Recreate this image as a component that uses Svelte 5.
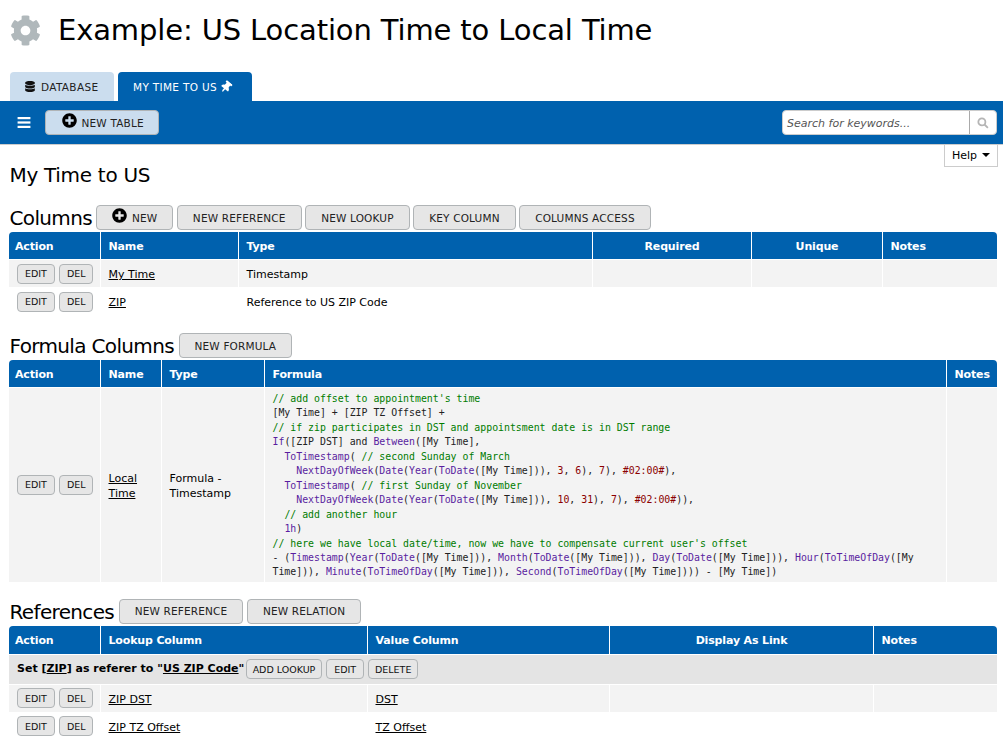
<script>
  const plus = "M256 8C119 8 8 119 8 256s111 248 248 248 248-111 248-248S393 8 256 8zm144 276c0 6.600-5.400 12-12 12h-92v92c0 6.600-5.400 12-12 12h-56c-6.600 0-12-5.400-12-12v-92h-92c-6.600 0-12-5.400-12-12v-56c0-6.600 5.400-12 12-12h92v-92c0-6.600 5.400-12 12-12h56c6.600 0 12 5.400 12 12v92h92c6.600 0 12 5.400 12 12v56z";

  const columns = [
    { name: "My Time", type: "Timestamp" },
    { name: "ZIP", type: "Reference to US ZIP Code" }
  ];
  const lookups = [
    { name: "ZIP DST", value: "DST" },
    { name: "ZIP TZ Offset", value: "TZ Offset" }
  ];
</script>

<header class="title">
  <svg class="gear" viewBox="0 0 512 512"><path d="M487.400 315.700l-42.600-24.600c4.300-23.200 4.300-47 0-70.200l42.600-24.600c4.900-2.800 7.100-8.600 5.500-14-11.100-35.600-30-67.800-54.700-94.600-3.800-4.100-10-5.100-14.800-2.300L380.800 110c-17.900-15.400-38.500-27.300-60.800-35.100V25.800c0-5.600-3.900-10.500-9.400-11.700-36.700-8.200-74.300-7.800-109.200 0-5.500 1.200-9.400 6.100-9.400 11.700V75c-22.200 7.900-42.800 19.800-60.800 35.100L88.700 85.500c-4.900-2.800-11-1.900-14.800 2.300-24.700 26.700-43.600 58.900-54.700 94.600-1.700 5.400.6 11.200 5.500 14L67.300 221c-4.300 23.200-4.300 47 0 70.200l-42.600 24.600c-4.900 2.800-7.100 8.600-5.500 14 11.100 35.600 30 67.800 54.700 94.600 3.800 4.100 10 5.100 14.800 2.300l42.600-24.600c17.900 15.400 38.500 27.300 60.800 35.100v49.200c0 5.600 3.900 10.500 9.400 11.700 36.700 8.200 74.300 7.800 109.200 0 5.500-1.200 9.400-6.100 9.400-11.700v-49.200c22.200-7.900 42.800-19.800 60.800-35.100l42.600 24.600c4.900 2.800 11 1.900 14.800-2.300 24.700-26.700 43.600-58.900 54.700-94.600 1.500-5.500-.7-11.300-5.600-14.100zM256 336c-44.100 0-80-35.900-80-80s35.900-80 80-80 80 35.900 80 80-35.900 80-80 80z" /></svg>
  <h1>Example: US Location Time to Local Time</h1>
</header>

<nav class="tabs">
  <div class="tab">
    <svg class="tab-icon" viewBox="0 0 448 512"><path d="M448 73v46c0 40-100 73-224 73S0 159 0 119V73C0 33 100 0 224 0s224 33 224 73zm0 103v103c0 40-100 73-224 73S0 319 0 279V176c48 33 136 49 224 49s176-16 224-49zm0 160v103c0 40-100 73-224 73S0 479 0 439V336c48 33 136 49 224 49s176-16 224-49z" /></svg>
    DATABASE
  </div>
  <div class="tab active">
    MY TIME TO US
    <svg class="pin" viewBox="0 0 384 512"><path d="M298 214L286 96h42c13 0 24-11 24-24V24c0-13-11-24-24-24H56C43 0 32 11 32 24v48c0 13 11 24 24 24h42L86 214C37 237 0 277 0 328c0 13 11 24 24 24h136v104c0 1 0 2 1 4l24 48c3 6 11 6 14 0l24-48c1-1 1-3 1-4V352h136c13 0 24-11 24-24 0-51-38-91-86-114z" /></svg>
  </div>
</nav>

<div class="toolbar">
  <svg class="bars" viewBox="0 0 14 12"><rect y="0" width="14" height="2.400" /><rect y="4.800" width="14" height="2.400" /><rect y="9.600" width="14" height="2.400" /></svg>
  <button class="btn blue"><svg class="plus" viewBox="0 0 512 512"><path d={plus} /></svg>NEW TABLE</button>
  <div class="search">
    <span class="search-input">Search for keywords...</span>
    <span class="search-btn">
      <svg viewBox="0 0 16 16"><circle cx="6.500" cy="6.500" r="4.700" /><line x1="10" y1="10" x2="14.500" y2="14.500" /></svg>
    </span>
  </div>
</div>

<main>
  <div class="help-row"><div class="help">Help <span class="caret"></span></div></div>
  <h2>My Time to US</h2>

  <div class="section">
    <h3>Columns</h3>
    <button class="btn"><svg class="plus" viewBox="0 0 512 512"><path d={plus} /></svg>NEW</button>
    <button class="btn">NEW REFERENCE</button>
    <button class="btn">NEW LOOKUP</button>
    <button class="btn">KEY COLUMN</button>
    <button class="btn">COLUMNS ACCESS</button>
  </div>
  <table>
    <colgroup><col style="width:91px" /><col style="width:138px" /><col style="width:354px" /><col style="width:159px" /><col style="width:131px" /><col /></colgroup>
    <thead><tr><th>Action</th><th>Name</th><th>Type</th><th class="c">Required</th><th class="c">Unique</th><th>Notes</th></tr></thead>
    <tbody>
      {#each columns as col}
        <tr>
          <td class="act"><button class="mini">EDIT</button> <button class="mini">DEL</button></td>
          <td><a href="#top">{col.name}</a></td>
          <td>{col.type}</td><td></td><td></td><td></td>
        </tr>
      {/each}
    </tbody>
  </table>

  <div class="section">
    <h3>Formula Columns</h3>
    <button class="btn">NEW FORMULA</button>
  </div>
  <table>
    <colgroup><col style="width:91px" /><col style="width:61px" /><col style="width:103px" /><col style="width:682px" /><col /></colgroup>
    <thead><tr><th>Action</th><th>Name</th><th>Type</th><th>Formula</th><th>Notes</th></tr></thead>
    <tbody>
      <tr>
        <td class="act"><button class="mini">EDIT</button> <button class="mini">DEL</button></td>
        <td><a href="#top">Local Time</a></td>
        <td>Formula - Timestamp</td>
        <td class="code"><span class="cm">// add offset to appointment's time</span><br />
[My Time] + [ZIP TZ Offset] +<br />
<span class="cm">// if zip participates in DST and appointsment date is in DST range</span><br />
<span class="fn">If</span>([ZIP DST] and <span class="fn">Between</span>([My Time],<br />
&nbsp;&nbsp;<span class="fn">ToTimestamp</span>( <span class="cm">// second Sunday of March</span><br />
&nbsp;&nbsp;&nbsp;&nbsp;<span class="fn">NextDayOfWeek</span>(<span class="fn">Date</span>(<span class="fn">Year</span>(<span class="fn">ToDate</span>([My Time])), <span class="num">3</span>, <span class="num">6</span>), <span class="num">7</span>), <span class="num">#02:00#</span>),<br />
&nbsp;&nbsp;<span class="fn">ToTimestamp</span>( <span class="cm">// first Sunday of November</span><br />
&nbsp;&nbsp;&nbsp;&nbsp;<span class="fn">NextDayOfWeek</span>(<span class="fn">Date</span>(<span class="fn">Year</span>(<span class="fn">ToDate</span>([My Time])), <span class="num">10</span>, <span class="num">31</span>), <span class="num">7</span>), <span class="num">#02:00#</span>)),<br />
&nbsp;&nbsp;<span class="cm">// add another hour</span><br />
&nbsp;&nbsp;<span class="fn">1h</span>)<br />
<span class="cm">// here we have local date/time, now we have to compensate current user's offset</span><br />
- (<span class="fn">Timestamp</span>(<span class="fn">Year</span>(<span class="fn">ToDate</span>([My Time])), <span class="fn">Month</span>(<span class="fn">ToDate</span>([My Time])), <span class="fn">Day</span>(<span class="fn">ToDate</span>([My Time])), <span class="fn">Hour</span>(<span class="fn">ToTimeOfDay</span>([My Time])), <span class="fn">Minute</span>(<span class="fn">ToTimeOfDay</span>([My Time])), <span class="fn">Second</span>(<span class="fn">ToTimeOfDay</span>([My Time]))) - [My Time])</td>
        <td></td>
      </tr>
    </tbody>
  </table>

  <div class="section refs">
    <h3>References</h3>
    <button class="btn">NEW REFERENCE</button>
    <button class="btn">NEW RELATION</button>
  </div>
  <table class="tall">
    <colgroup><col style="width:91px" /><col style="width:267px" /><col style="width:242px" /><col style="width:264px" /><col /></colgroup>
    <thead><tr><th>Action</th><th>Lookup Column</th><th>Value Column</th><th class="c">Display As Link</th><th>Notes</th></tr></thead>
    <tbody>
      <tr class="group">
        <td colspan="5">Set [<a href="#top">ZIP</a>] as referer to "<a href="#top">US ZIP Code</a>"
          <button class="mini tight first">ADD LOOKUP</button> <button class="mini">EDIT</button> <button class="mini tight">DELETE</button></td>
      </tr>
      {#each lookups as row}
        <tr>
          <td class="act"><button class="mini">EDIT</button> <button class="mini">DEL</button></td>
          <td><a href="#top">{row.name}</a></td>
          <td><a href="#top">{row.value}</a></td><td></td><td></td>
        </tr>
      {/each}
    </tbody>
  </table>
</main>

<style>
  :global(body) {
    margin: 0;
    background: #fff;
    color: #000;
    font-family: "DejaVu Sans", Verdana, sans-serif;
    font-size: 11px;
    overflow: hidden;
  }
  .title {
    display: flex;
    align-items: center;
    height: 60px;
    padding-left: 10px;
  }
  .gear {
    width: 31px;
    height: 31px;
    fill: #b0b8bb;
    margin-right: 17px;
  }
  h1 {
    margin: 0;
    font-size: 29px;
    font-weight: 400;
    letter-spacing: -0.13px;
  }
  .tabs {
    display: flex;
    gap: 4px;
    height: 29px;
    margin-top: 12px;
    padding-left: 10px;
  }
  .tab {
    display: flex;
    align-items: center;
    box-sizing: border-box;
    width: 104px;
    padding-left: 15px;
    background: #cbddee;
    border-radius: 4px 4px 0 0;
    font-size: 10.500px;
    letter-spacing: 0.33px;
    color: #222;
  }
  .tab.active {
    width: 134px;
    background: #0061ae;
    color: #fff;
  }
  .tab-icon {
    width: 10px;
    height: 11px;
    margin-right: 6px;
    fill: #111;
  }
  .pin {
    width: 10px;
    height: 12px;
    margin-left: 4px;
    fill: #fff;
    transform: rotate(40deg);
  }
  .toolbar {
    display: flex;
    align-items: center;
    box-sizing: border-box;
    height: 44px;
    padding: 0 6px 0 17px;
    background: #0061ae;
    border-bottom: 1px solid #ccc;
  }
  .bars {
    width: 14px;
    height: 11px;
    fill: #fff;
    margin-right: 14px;
  }
  .btn {
    display: inline-flex;
    align-items: center;
    justify-content: center;
    box-sizing: border-box;
    height: 25px;
    padding: 0 15px;
    border: 1px solid #b0b4b6;
    border-radius: 4px;
    background: #e6e6e6;
    color: #222;
    font: inherit;
    font-size: 10.500px;
    letter-spacing: 0.17px;
  }
  .btn.blue {
    background: #cbddee;
    padding: 0 14px 0 16px;
  }
  .plus {
    width: 15px;
    height: 15px;
    margin: -4px 4.500px 0 0;
    fill: #000;
  }
  .search {
    display: flex;
    margin-left: auto;
    width: 215px;
    height: 25px;
    background: #fff;
    border: 1px solid #ccc;
    box-sizing: border-box;
    border-radius: 4px;
  }
  .search-input {
    flex: 1;
    align-self: center;
    padding: 1px 0 0 4px;
    font-size: 11px;
    font-style: italic;
    color: #555;
  }
  .search-btn {
    display: flex;
    align-items: center;
    justify-content: center;
    width: 26px;
    border-left: 1px solid #aaa;
  }
  .search-btn svg {
    width: 12px;
    height: 12px;
    fill: none;
    stroke: #b5b5b5;
    stroke-width: 2.400;
  }
  main {
    padding: 0 6px 0 9px;
  }
  .help-row {
    display: flex;
    justify-content: flex-end;
    height: 0;
  }
  .help {
    box-sizing: border-box;
    display: flex;
    align-items: center;
    justify-content: center;
    gap: 5px;
    width: 54px;
    height: 22px;
    margin-right: -1px;
    border: 1px solid #ccc;
    border-top: 0;
    font-size: 11px;
    background: #fff;
  }
  .caret {
    width: 0;
    height: 0;
    margin-top: -2px;
    border: 4.500px solid transparent;
    border-top-color: #000;
    border-bottom: 0;
  }
  h2 {
    margin: 0;
    padding: 18px 0 0 0.5px;
    font-size: 20px;
    line-height: 24px;
    font-weight: 400;
    letter-spacing: -0.3px;
  }
  .section {
    display: flex;
    align-items: center;
    gap: 3.500px;
    height: 25px;
    margin: 18px 0 2px;
  }
  .section.refs {
    margin-top: 17px;
  }
  h3 {
    margin: 0 1px 0 0;
    padding: 2px 0 0 0.5px;
    font-size: 20px;
    font-weight: 400;
    line-height: 23px;
    letter-spacing: -0.65px;
  }
  table {
    width: 988px;
    table-layout: fixed;
    border-collapse: separate;
    border-spacing: 0;
  }
  th {
    height: 27px;
    padding: 2px 7.500px 0;
    background: #0061ae;
    color: #fff;
    font-size: 11px;
    font-weight: 700;
    letter-spacing: -0.15px;
    text-align: left;
    border-left: 1px solid #fff;
    box-sizing: border-box;
  }
  .tall th {
    height: 28px;
  }
  th:first-child {
    border-left: 0;
    padding-left: 6px;
    border-radius: 4px 0 0 0;
  }
  th:last-child {
    border-radius: 0 4px 0 0;
  }
  th.c {
    text-align: center;
  }
  td {
    height: 28px;
    padding: 2px 7.500px 0;
    box-sizing: border-box;
    border-left: 1px solid #fff;
    border-top: 1px solid #fff;
    font-size: 11px;
    line-height: 15px;
  }
  td:first-child {
    border-left: 0;
  }
  tbody tr:nth-child(odd) td {
    background: #f3f3f3;
  }
  td a {
    color: #000;
    text-decoration: underline;
  }
  td.act {
    padding: 0 0 0 8px;
    white-space: nowrap;
  }
  .mini {
    box-sizing: border-box;
    height: 20px;
    padding: 0 7px;
    border: 1px solid #b0b4b6;
    border-radius: 4px;
    background: #e6e6e6;
    color: #111;
    font: inherit;
    font-size: 9.500px;
    vertical-align: middle;
  }
  td.act .mini + .mini {
    margin-left: 1px;
    padding: 0 6.500px;
  }
  .mini.tight {
    padding: 0 6px;
  }
  .mini.first {
    margin-left: -2.500px;
  }
  td.code {
    padding: 4px 7.500px 2px;
    font-family: "DejaVu Sans Mono", monospace;
    font-size: 9.870px;
    line-height: 14.450px;
    color: #222;
  }
  .cm { color: #007c00; }
  .fn { color: #5a1ea0; }
  .num { color: #8b0000; }
  tbody tr.group td {
    height: 30px;
    padding: 0 8px;
    background: #e4e4e4;
    font-weight: 700;
  }
  tr.group .mini {
    font-weight: 400;
  }
  tbody tr.group + tr td {
    background: #f3f3f3;
  }
  tbody tr.group + tr + tr td {
    background: #fff;
  }
</style>
